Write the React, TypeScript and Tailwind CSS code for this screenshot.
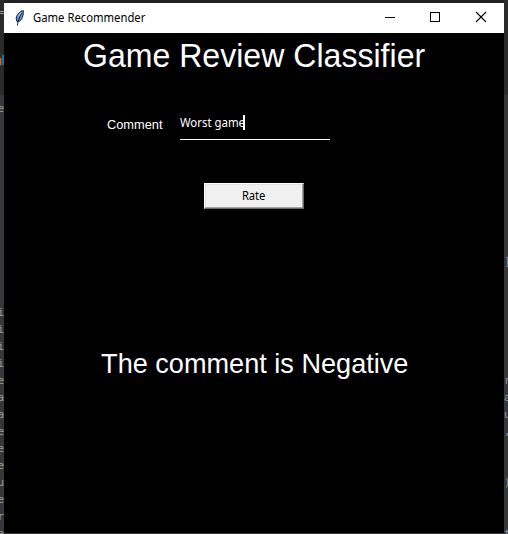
type GutterProps = { lines: Record<number, string>; side: "left" | "right" };

const LEFT: Record<number, string> = {
  6: "e", 18: "i", 19: "i", 20: "i", 21: "i", 22: "e", 23: "a", 24: "a",
  25: "e", 26: "e", 27: "e", 28: "u", 29: "e", 30: "r", 31: "e",
};
const RIGHT: Record<number, string> = { 15: "]", 22: "r", 23: "a", 24: "u", 25: ",", 28: ")", 31: "t" };

// The sliver of the code editor that shows on each side of the window.
function Gutter({ lines, side }: GutterProps) {
  return (
    <div
      className={
        "relative h-[534px] w-1 shrink-0 overflow-hidden bg-[#2b2b2b] " +
        (side === "left" ? "text-[#a09c94]" : "text-[#8796ad]")
      }
    >
      <div className="h-[95px]" />
      <div className="h-[439px] bg-[#34383b]" />
      <div className="absolute inset-x-0 -top-[2px] font-['DejaVu_Sans_Mono',monospace] text-[11px] leading-[17px]">
        {Array.from({ length: 32 }, (_, i) => (
          <div key={i} className={side === "left" ? "flex h-[17px] justify-end" : "flex h-[17px]"}>
            {lines[i]}
          </div>
        ))}
      </div>
      {side === "left" && (
        <div className="absolute inset-0 font-['DejaVu_Sans_Mono',monospace] text-[11px] leading-[17px]">
          <span className="absolute right-0 top-[4px]">=</span>
          <span className="absolute right-[2px] top-[52px] text-[#b08a5c]">g</span>
          <span className="absolute left-[2px] top-[55px] h-[10px] w-[2px] bg-[#2a6d96]" />
        </div>
      )}
    </div>
  );
}

function Feather() {
  return (
    <svg width="10" height="16" viewBox="0 0 10 16" className="block">
      <path d="M8.3.6C5 1.2 1.6 4.4 1.2 8.4L1.9 11.4 4.2 11.4C7 9.6 8.2 6 8.3 2.5Z" fill="#5a94dc" stroke="#16202e" strokeWidth="1" />
      <path d="M6.8 3.2C5.2 6 3.2 9 2.4 15.5" fill="none" stroke="#101820" strokeWidth="1" />
      <path d="M6.6 2 3 6.6" stroke="#a9cbf2" strokeWidth="1" />
    </svg>
  );
}

export default function App() {
  return (
    <div className="flex h-[534px] w-[508px] overflow-hidden bg-[#2b2b2b]">
      <Gutter lines={LEFT} side="left" />
      <div className="flex h-[534px] w-[500px] flex-col">
        <div className="h-[3px] bg-[#222222]" />
        <header className="flex h-[30px] items-center bg-white text-black">
          <div className="-mt-px pl-[11px]"><Feather /></div>
          <span className="ml-[8px] flex-1 origin-left scale-x-[0.94] whitespace-nowrap font-['Noto_Sans',sans-serif] text-[12px] leading-4">Game Recommender</span>
          <svg width="138" height="30" viewBox="0 0 138 30" fill="none" stroke="#000" shapeRendering="crispEdges">
            <path d="M19 14.5h10M64.5 9.5h9v9h-9z" />
            <path d="M110 9l10 10M120 9l-10 10" shapeRendering="auto" strokeWidth="1.1" />
          </svg>
        </header>
        <main className="flex h-[500px] flex-col items-center bg-black font-['Liberation_Sans',Arial,sans-serif] text-white">
          <h1 className="mt-[3px] h-10 scale-x-[0.972] whitespace-nowrap text-[33px] leading-10">Game Review Classifier</h1>
          <form className="mt-[32px] flex h-[32px] w-full pl-[103px]" onSubmit={(e) => e.preventDefault()}>
            <label className="w-[73px] origin-left scale-x-[0.985] pt-[9px] text-[13px] leading-4">Comment</label>
            <div className="flex h-[32px] w-[150px] border-b border-white pt-[7px] font-['Noto_Sans',sans-serif] text-[12px] leading-4">
              <span className="w-[63px] origin-left scale-x-[0.95] whitespace-nowrap">Worst game</span>
              <span className="h-[15px] w-[2px] bg-white" />
            </div>
          </form>
          <button className="mt-[43px] h-[26px] w-[100px] border border-t-white border-l-white border-r-[#696969] border-b-[#696969] bg-[#f0f0f0] font-['Noto_Sans',sans-serif] text-[12px] leading-4 text-black shadow-[inset_-1px_-1px_0_#a0a0a0,inset_1px_1px_0_#e3e3e3]">
            <span className="inline-block scale-x-[0.93]">Rate</span>
          </button>
          <p className="ml-[2px] mt-[137px] scale-x-[0.968] whitespace-nowrap text-[28px] leading-9">The comment is Negative</p>
        </main>
        <div className="h-px bg-[#39363a]" />
      </div>
      <Gutter lines={RIGHT} side="right" />
    </div>
  );
}
